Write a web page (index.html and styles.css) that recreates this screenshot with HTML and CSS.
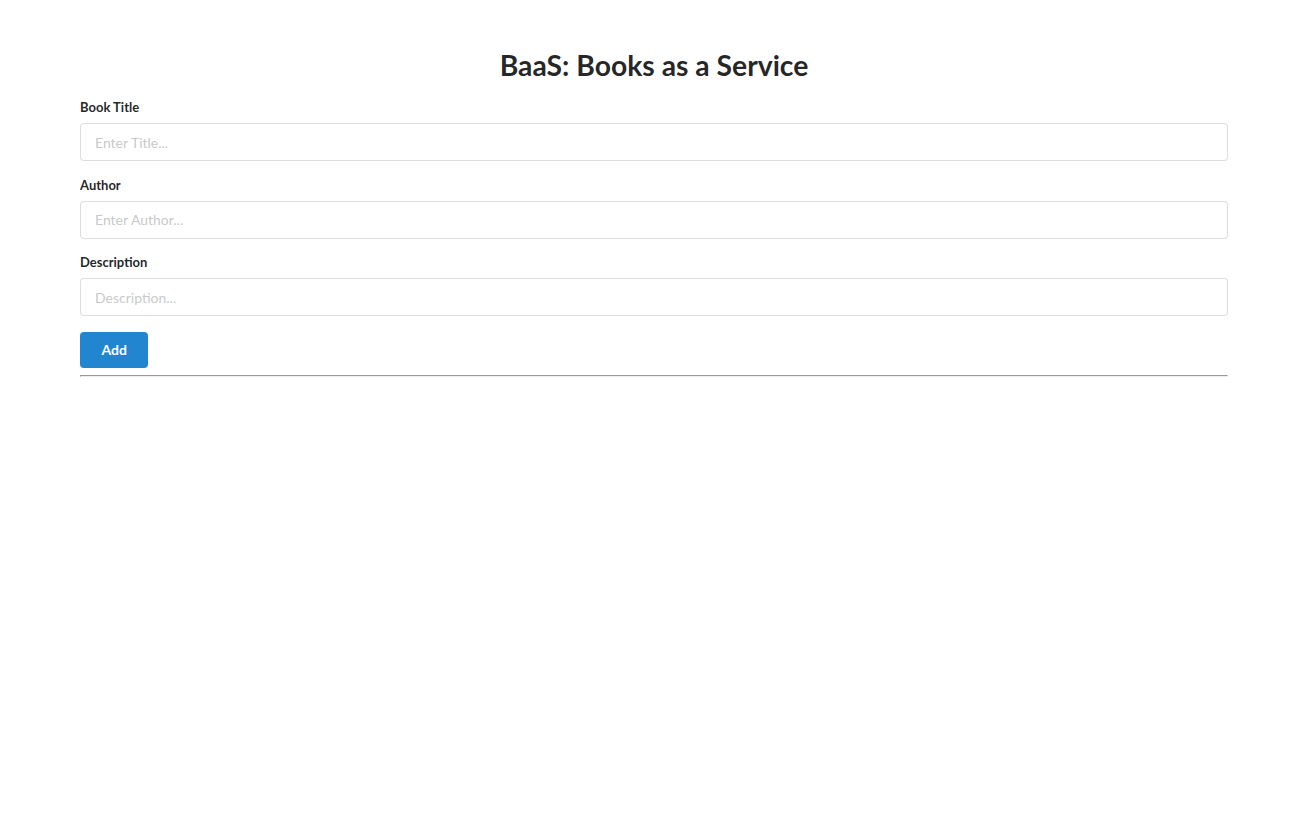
FILE: index.html
```html
<!DOCTYPE html>
<html>
<head>
<meta charset="utf-8">
<title>BaaS</title>
<link rel="stylesheet" href="styles.css">
</head>
<body>
<div class="container">
  <h1 class="title">BaaS: Books as a Service</h1>
  <form class="form">
    <div class="field">
      <label>Book Title</label>
      <input type="text" placeholder="Enter Title...">
    </div>
    <div class="field">
      <label>Author</label>
      <input type="text" placeholder="Enter Author...">
    </div>
    <div class="field">
      <label>Description</label>
      <input type="text" placeholder="Description...">
    </div>
    <button type="button" class="btn">Add</button>
  </form>
  <hr class="rule">
</div>
</body>
</html>
```
FILE: styles.css
```css
html, body {
  margin: 0;
  padding: 0;
  background: #fff;
  font-family: Lato, "Helvetica Neue", Arial, sans-serif;
  font-size: 14px;
  color: rgba(0,0,0,0.87);
}
.container {
  margin: 0 80px;
  padding-top: 47px;
}
.title {
  margin: 0 0 16px;
  text-align: center;
  font-size: 28.3px;
  font-weight: 700;
  line-height: 36px;
  color: rgba(0,0,0,0.87);
}
.form {
  display: flex;
  flex-direction: column;
}
.field {
  display: flex;
  flex-direction: column;
  margin-bottom: 15.5px;
}
.field label {
  font-size: 13px;
  font-weight: 700;
  line-height: 16px;
  margin-bottom: 8px;
  color: rgba(0,0,0,0.87);
}
.field input {
  font-family: Lato, "Helvetica Neue", Arial, sans-serif;
  font-size: 14px;
  line-height: 17px;
  padding: 9.5px 14px;
  border: 1px solid rgba(34,36,38,0.15);
  border-radius: 4px;
  outline: none;
  color: rgba(0,0,0,0.87);
  margin: 0;
}
.field input::placeholder {
  color: rgba(191,191,191,0.87);
}
.btn {
  align-self: flex-start;
  font-family: Lato, "Helvetica Neue", Arial, sans-serif;
  font-size: 14px;
  font-weight: 700;
  line-height: 14px;
  padding: 11px 21.5px;
  border: none;
  border-radius: 4px;
  background: #2185d0;
  color: #fff;
  margin: 0;
}
.rule {
  margin: 7px 0;
}
```
